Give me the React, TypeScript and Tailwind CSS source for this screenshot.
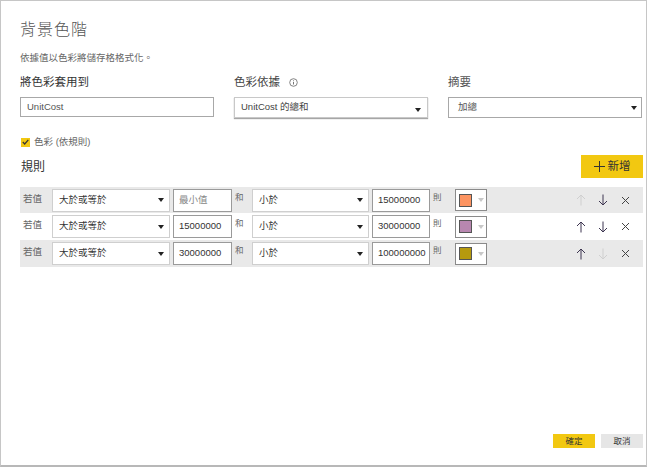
import React from "react";

const FONT = { fontFamily: '"Liberation Sans", "Noto Sans CJK TC", sans-serif' };

function Caret({ color = "#222" }: { color?: string }) {
  return (
    <svg width="6" height="4" viewBox="0 0 6 4">
      <path d="M0 0 L6 0 L3 4 Z" fill={color} />
    </svg>
  );
}

function Select({ text, w }: { text: string; w: string }) {
  return (
    <div className={`${w} h-[23px] bg-white border border-[#cfcfcf] flex items-center justify-between pl-[6px] pr-[5px] text-[9.5px] text-[#333]`}>
      <span>{text}</span>
      <Caret />
    </div>
  );
}

function Input({ text, w, placeholder }: { text: string; w: string; placeholder?: boolean }) {
  return (
    <div className={`${w} h-[23px] bg-white border border-[#9a9a9a] flex items-center pl-[5px] text-[9.5px] ${placeholder ? "text-[#888]" : "text-[#333]"}`}>
      {text}
    </div>
  );
}

function Arrow({ dir, enabled }: { dir: "up" | "down"; enabled: boolean }) {
  const c = enabled ? "#3d3550" : "#cfcfcf";
  return (
    <div className="w-[22px] flex justify-center">
      <svg width="10" height="12" viewBox="0 0 10 12" style={{ transform: dir === "down" ? "rotate(180deg)" : undefined }}>
        <path d="M5 1 L5 11.5 M1 5 L5 1 L9 5" stroke={c} strokeWidth="1" fill="none" />
      </svg>
    </div>
  );
}

function Close() {
  return (
    <div className="w-[22px] flex justify-center">
      <svg width="9" height="9" viewBox="0 0 9 9">
        <path d="M1 1 L8 8 M8 1 L1 8" stroke="#444" strokeWidth="1" fill="none" />
      </svg>
    </div>
  );
}

function Row({
  gray,
  from,
  fromPlaceholder,
  to,
  color,
  upEnabled,
  downEnabled,
  h,
}: {
  gray: boolean;
  from: string;
  fromPlaceholder?: boolean;
  to: string;
  color: string;
  upEnabled: boolean;
  downEnabled: boolean;
  h: string;
}) {
  return (
    <div className={`${h} w-full flex items-center ${gray ? "bg-[#e9e9e9]" : "bg-white"}`}>
      <div className="w-[32px] pl-[3px] text-[9.5px] text-[#666] self-start pt-[5px]">若值</div>
      <Select text="大於或等於" w="w-[118px]" />
      <div className="w-[3px]" />
      <Input text={from} w="w-[59px]" placeholder={fromPlaceholder} />
      <div className="w-[20px] pl-[3px] text-[8.5px] text-[#666] self-start pt-[4px]">和</div>
      <Select text="小於" w="w-[117px]" />
      <div className="w-[3px]" />
      <Input text={to} w="w-[58px]" />
      <div className="w-[25px] pl-[3px] text-[8.5px] text-[#666] self-start pt-[4px]">則</div>
      <div className="w-[32px] h-[22px] bg-white border border-[#8a8a8a] flex items-center pl-[3px] gap-[6px]">
        <div className="w-[13px] h-[13px] border border-[#555]" style={{ backgroundColor: color }} />
        <Caret color="#c8c8c8" />
      </div>
      <div className="flex-1" />
      <Arrow dir="up" enabled={upEnabled} />
      <Arrow dir="down" enabled={downEnabled} />
      <Close />
      <div className="w-[7px]" />
    </div>
  );
}

export default function App() {
  return (
    <div className="w-[650px] h-[468px] bg-white" style={FONT}>
      <div className="w-[647px] h-[467px] border border-[#c6c6c6] border-b-2 border-b-[#b8b8b8] bg-white flex flex-col pl-[19px] pt-[17px]">
        <div className="w-[623px] flex flex-col h-full">
          <div className="h-[24px] text-[16px] leading-[24px] font-light text-[#555] tracking-[1px]">背景色階</div>
          <div className="mt-[9px] h-[14px] text-[9.5px] leading-[14px] text-[#666]">依據值以色彩將儲存格格式化。</div>
          <div className="mt-[9px] grid grid-cols-3 gap-x-[20px] w-[622px]">
            <div className="h-[16px] text-[11.5px] leading-[16px] text-[#333]">將色彩套用到</div>
            <div className="h-[16px] text-[11.5px] leading-[16px] text-[#444] flex items-center gap-[9px]">
              <span>色彩依據</span>
              <svg width="9" height="9" viewBox="0 0 9 9">
                <circle cx="4.5" cy="4.5" r="3.8" stroke="#666" strokeWidth="0.8" fill="none" />
                <path d="M4.5 4 L4.5 6.5" stroke="#666" strokeWidth="0.9" />
                <circle cx="4.5" cy="2.7" r="0.5" fill="#666" />
              </svg>
            </div>
            <div className="h-[16px] text-[11.5px] leading-[16px] text-[#555]">摘要</div>
            <div className="mt-[7px] h-[20px] border border-[#a8a8a8] flex items-center pl-[6px] text-[9.5px] text-[#555]">UnitCost</div>
            <div className="mt-[7px] h-[21px] border border-[#c8c8c8] shadow-[0_1px_1px_rgba(0,0,0,0.35)] flex items-center justify-between pl-[6px] pr-[6px] text-[9.5px] text-[#444]">
              <span>UnitCost 的總和</span>
              <div className="pt-[5px]">
                <Caret />
              </div>
            </div>
            <div className="mt-[7px] h-[21px] border border-[#a8a8a8] flex items-center justify-between pl-[9px] pr-[4px] text-[9.5px] text-[#555]">
              <span>加總</span>
              <Caret />
            </div>
          </div>
          <div className="mt-[17px] flex items-center gap-[4px] h-[14px]">
            <div className="w-[9px] h-[9px] bg-[#f2c811] flex items-center justify-center ml-[1px]">
              <svg width="7" height="6" viewBox="0 0 7 6">
                <path d="M0.8 3 L2.7 5 L6.3 0.8" stroke="#333" strokeWidth="1.2" fill="none" />
              </svg>
            </div>
            <span className="text-[9.5px] text-[#666]">色彩 (依規則)</span>
          </div>
          <div className="mt-[6px] flex items-center justify-between h-[23px]">
            <span className="text-[12px] text-[#333] pl-[1px]">規則</span>
            <div className="w-[62px] h-[23px] bg-[#f2c811] flex items-center justify-center gap-[3px] text-[11.5px] text-[#333]">
              <svg width="11" height="11" viewBox="0 0 11 11">
                <path d="M5.5 0 L5.5 11 M0 5.5 L11 5.5" stroke="#333" strokeWidth="1" />
              </svg>
              <span>新增</span>
            </div>
          </div>
          <div className="mt-[9px] flex flex-col">
            <Row h="h-[26px]" gray from="最小值" fromPlaceholder to="15000000" color="#fd9461" upEnabled={false} downEnabled />
            <Row h="h-[27px]" gray={false} from="15000000" to="30000000" color="#b887b0" upEnabled downEnabled />
            <Row h="h-[27px]" gray from="30000000" to="100000000" color="#b69a0e" upEnabled downEnabled={false} />
          </div>
          <div className="flex-1" />
          <div className="flex justify-end gap-[6px] mb-[17px]">
            <div className="w-[42px] h-[14px] bg-[#f2c811] flex items-center justify-center text-[8.5px] text-[#333]">確定</div>
            <div className="w-[42px] h-[14px] bg-[#e6e6e6] flex items-center justify-center text-[8.5px] text-[#333]">取消</div>
          </div>
        </div>
      </div>
    </div>
  );
}
